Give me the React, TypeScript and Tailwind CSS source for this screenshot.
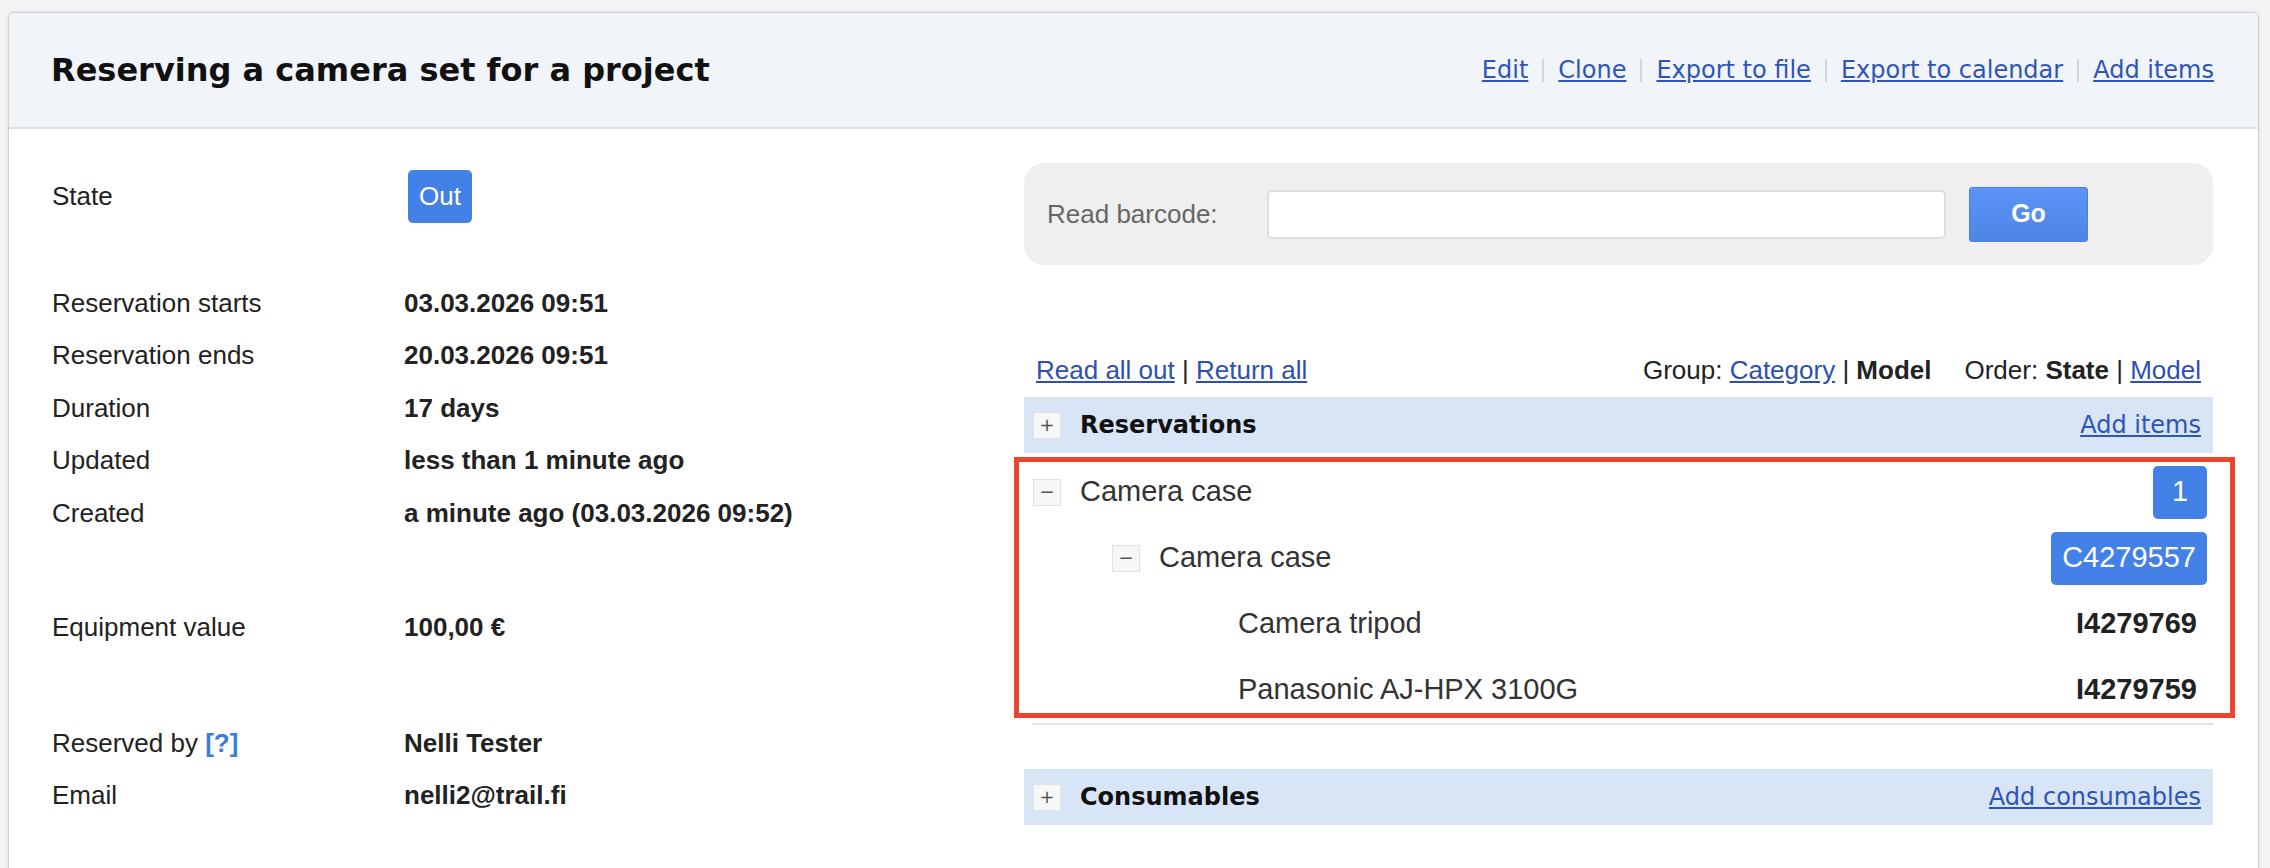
import React from 'react';

// Reservation detail page: header with actions, facts list on the left,
// barcode reader + reserved items tree on the right.

const sans = "font-['Liberation_Sans',Arial,sans-serif]";
const deja = "font-['DejaVu_Sans',Verdana,sans-serif]";

function HeaderSep() {
  return <span className="mx-[14px] inline-block h-[23px] w-[2px] bg-[#d3d6db]" aria-hidden />;
}

function Fact({ label, children, className = '' }: { label: React.ReactNode; children: React.ReactNode; className?: string }) {
  return (
    <div className={`flex h-[52.5px] items-center ${className}`}>
      <div className="w-[352px] shrink-0">{label}</div>
      <div className="font-bold">{children}</div>
    </div>
  );
}

function Toggle({ sign }: { sign: '+' | '−' }) {
  return (
    <span
      className={`flex h-[27px] w-[28px] shrink-0 items-center justify-center border border-[#e2e2e2] bg-[#f7f7f7] text-[18px] leading-none text-[#555] ${deja}`}
      aria-hidden
    >
      {sign}
    </span>
  );
}

function SectionBar({ title, action }: { title: string; action: string }) {
  return (
    <div className="flex h-[56px] items-center justify-between bg-[#d7e5f6] pl-[9px] pr-[12px]">
      <div className="flex items-center gap-[19px]">
        <Toggle sign="+" />
        <span className={`${deja} text-[24px] font-bold text-[#111]`}>{title}</span>
      </div>
      <a href="#" className={`${deja} text-[24px] text-[#2e54b6] underline`}>
        {action}
      </a>
    </div>
  );
}

interface TreeRow {
  level: 1 | 2 | 3;
  name: string;
  tag: string;
  badge: boolean;
}

const rows: TreeRow[] = [
  { level: 1, name: 'Camera case', tag: '1', badge: true },
  { level: 2, name: 'Camera case', tag: 'C4279557', badge: true },
  { level: 3, name: 'Camera tripod', tag: 'I4279769', badge: false },
  { level: 3, name: 'Panasonic AJ-HPX 3100G', tag: 'I4279759', badge: false },
];

const indent = { 1: 'pl-[9px]', 2: 'pl-[88px]', 3: 'pl-[214px]' } as const;

export default function App() {
  return (
    <div className={`min-h-screen bg-[#f4f4f4] pl-[8px] pr-[11px] pt-[12px] ${sans}`}>
      <div className="rounded-t-[6px] border border-[#d0d0d0] bg-white pb-[80px] shadow-[0_0_4px_rgba(0,0,0,0.1)]">
        <header className="flex h-[116px] items-center justify-between rounded-t-[6px] border-b-2 border-[#dde1e6] bg-[#f1f4f9] pl-[42px] pr-[44px]">
          <h1 className={`${deja} text-[32px] font-bold text-[#111]`}>Reserving a camera set for a project</h1>
          <nav className={`${deja} flex items-center text-[24px] text-[#2e54b6]`}>
            <a href="#" className="underline">Edit</a>
            <HeaderSep />
            <a href="#" className="underline">Clone</a>
            <HeaderSep />
            <a href="#" className="underline">Export to file</a>
            <HeaderSep />
            <a href="#" className="underline">Export to calendar</a>
            <HeaderSep />
            <a href="#" className="underline">Add items</a>
          </nav>
        </header>

        <div className="flex pl-[43px] pr-[44px]">
          {/* facts */}
          <div className="w-[972px] shrink-0 pt-[41px] text-[26px] text-[#222]">
            <div className="flex h-[53px] items-center">
              <div className="w-[356px] shrink-0">State</div>
              <span className="flex h-[53px] items-center rounded-[5px] bg-[#4381e6] px-[11px] text-white">Out</span>
            </div>
            <Fact label="Reservation starts" className="mt-[54px]">03.03.2026 09:51</Fact>
            <Fact label="Reservation ends">20.03.2026 09:51</Fact>
            <Fact label="Duration">17 days</Fact>
            <Fact label="Updated">less than 1 minute ago</Fact>
            <Fact label="Created">a minute ago (03.03.2026 09:52)</Fact>
            <Fact label="Equipment value" className="mt-[62px]">100,00 €</Fact>
            <Fact
              label={
                <>
                  Reserved by <span className="font-bold text-[#3b7ddd]">[?]</span>
                </>
              }
              className="mt-[63px]"
            >
              Nelli Tester
            </Fact>
            <Fact label="Email">nelli2@trail.fi</Fact>
          </div>

          {/* items */}
          <div className="w-[1189px] shrink-0 pt-[34px]">
            <div className="flex h-[102px] items-center rounded-[20px] bg-[#efefef] pl-[23px]">
              <span className="w-[220px] shrink-0 text-[26px] text-[#666]">Read barcode:</span>
              <input className="h-[49px] w-[679px] rounded-[5px] border-2 border-[#dedede] bg-white outline-none" />
              <button className="ml-[23px] h-[55px] w-[119px] rounded-[3px] border border-[#4a7fe2] bg-gradient-to-b from-[#5e93f7] to-[#4e85e6] text-[25px] font-bold text-white">
                Go
              </button>
            </div>

            <div className="mt-[90px] flex h-[30px] items-center justify-between px-[12px] text-[26px] text-[#222]">
              <div>
                <a href="#" className="text-[#2d4fb3] underline">Read all out</a>
                {' | '}
                <a href="#" className="text-[#2d4fb3] underline">Return all</a>
              </div>
              <div className="flex">
                <span>
                  Group: <a href="#" className="text-[#2d4fb3] underline">Category</a> | <b>Model</b>
                </span>
                <span className="ml-[33px]">
                  Order: <b>State</b> | <a href="#" className="text-[#2d4fb3] underline">Model</a>
                </span>
              </div>
            </div>

            <div className="mt-[12px]">
              <SectionBar title="Reservations" action="Add items" />
            </div>

            <div className="relative mt-[6px]">
              {rows.map((r, i) => (
                <div key={i} className={`flex h-[66px] items-center justify-between pr-[6px] ${indent[r.level]}`}>
                  <div className="flex items-center gap-[19px] text-[29px] text-[#333]">
                    {r.level < 3 && <Toggle sign="−" />}
                    <span>{r.name}</span>
                  </div>
                  {r.badge ? (
                    <span className="flex h-[53px] min-w-[54px] items-center justify-center rounded-[5px] bg-[#4381e6] px-[11px] text-[29px] text-white">
                      {r.tag}
                    </span>
                  ) : (
                    <span className="mr-[10px] text-[29px] font-bold text-[#222]">{r.tag}</span>
                  )}
                </div>
              ))}
              <div className="pointer-events-none absolute bottom-[5px] left-[-10px] right-[-22px] top-[-2px] border-[5px] border-[#e9452f]" />
            </div>

            <div className="ml-[8px] h-[2px] bg-[#e3e3e3]" />

            <div className="mt-[44px]">
              <SectionBar title="Consumables" action="Add consumables" />
            </div>
          </div>
        </div>
      </div>
    </div>
  );
}
